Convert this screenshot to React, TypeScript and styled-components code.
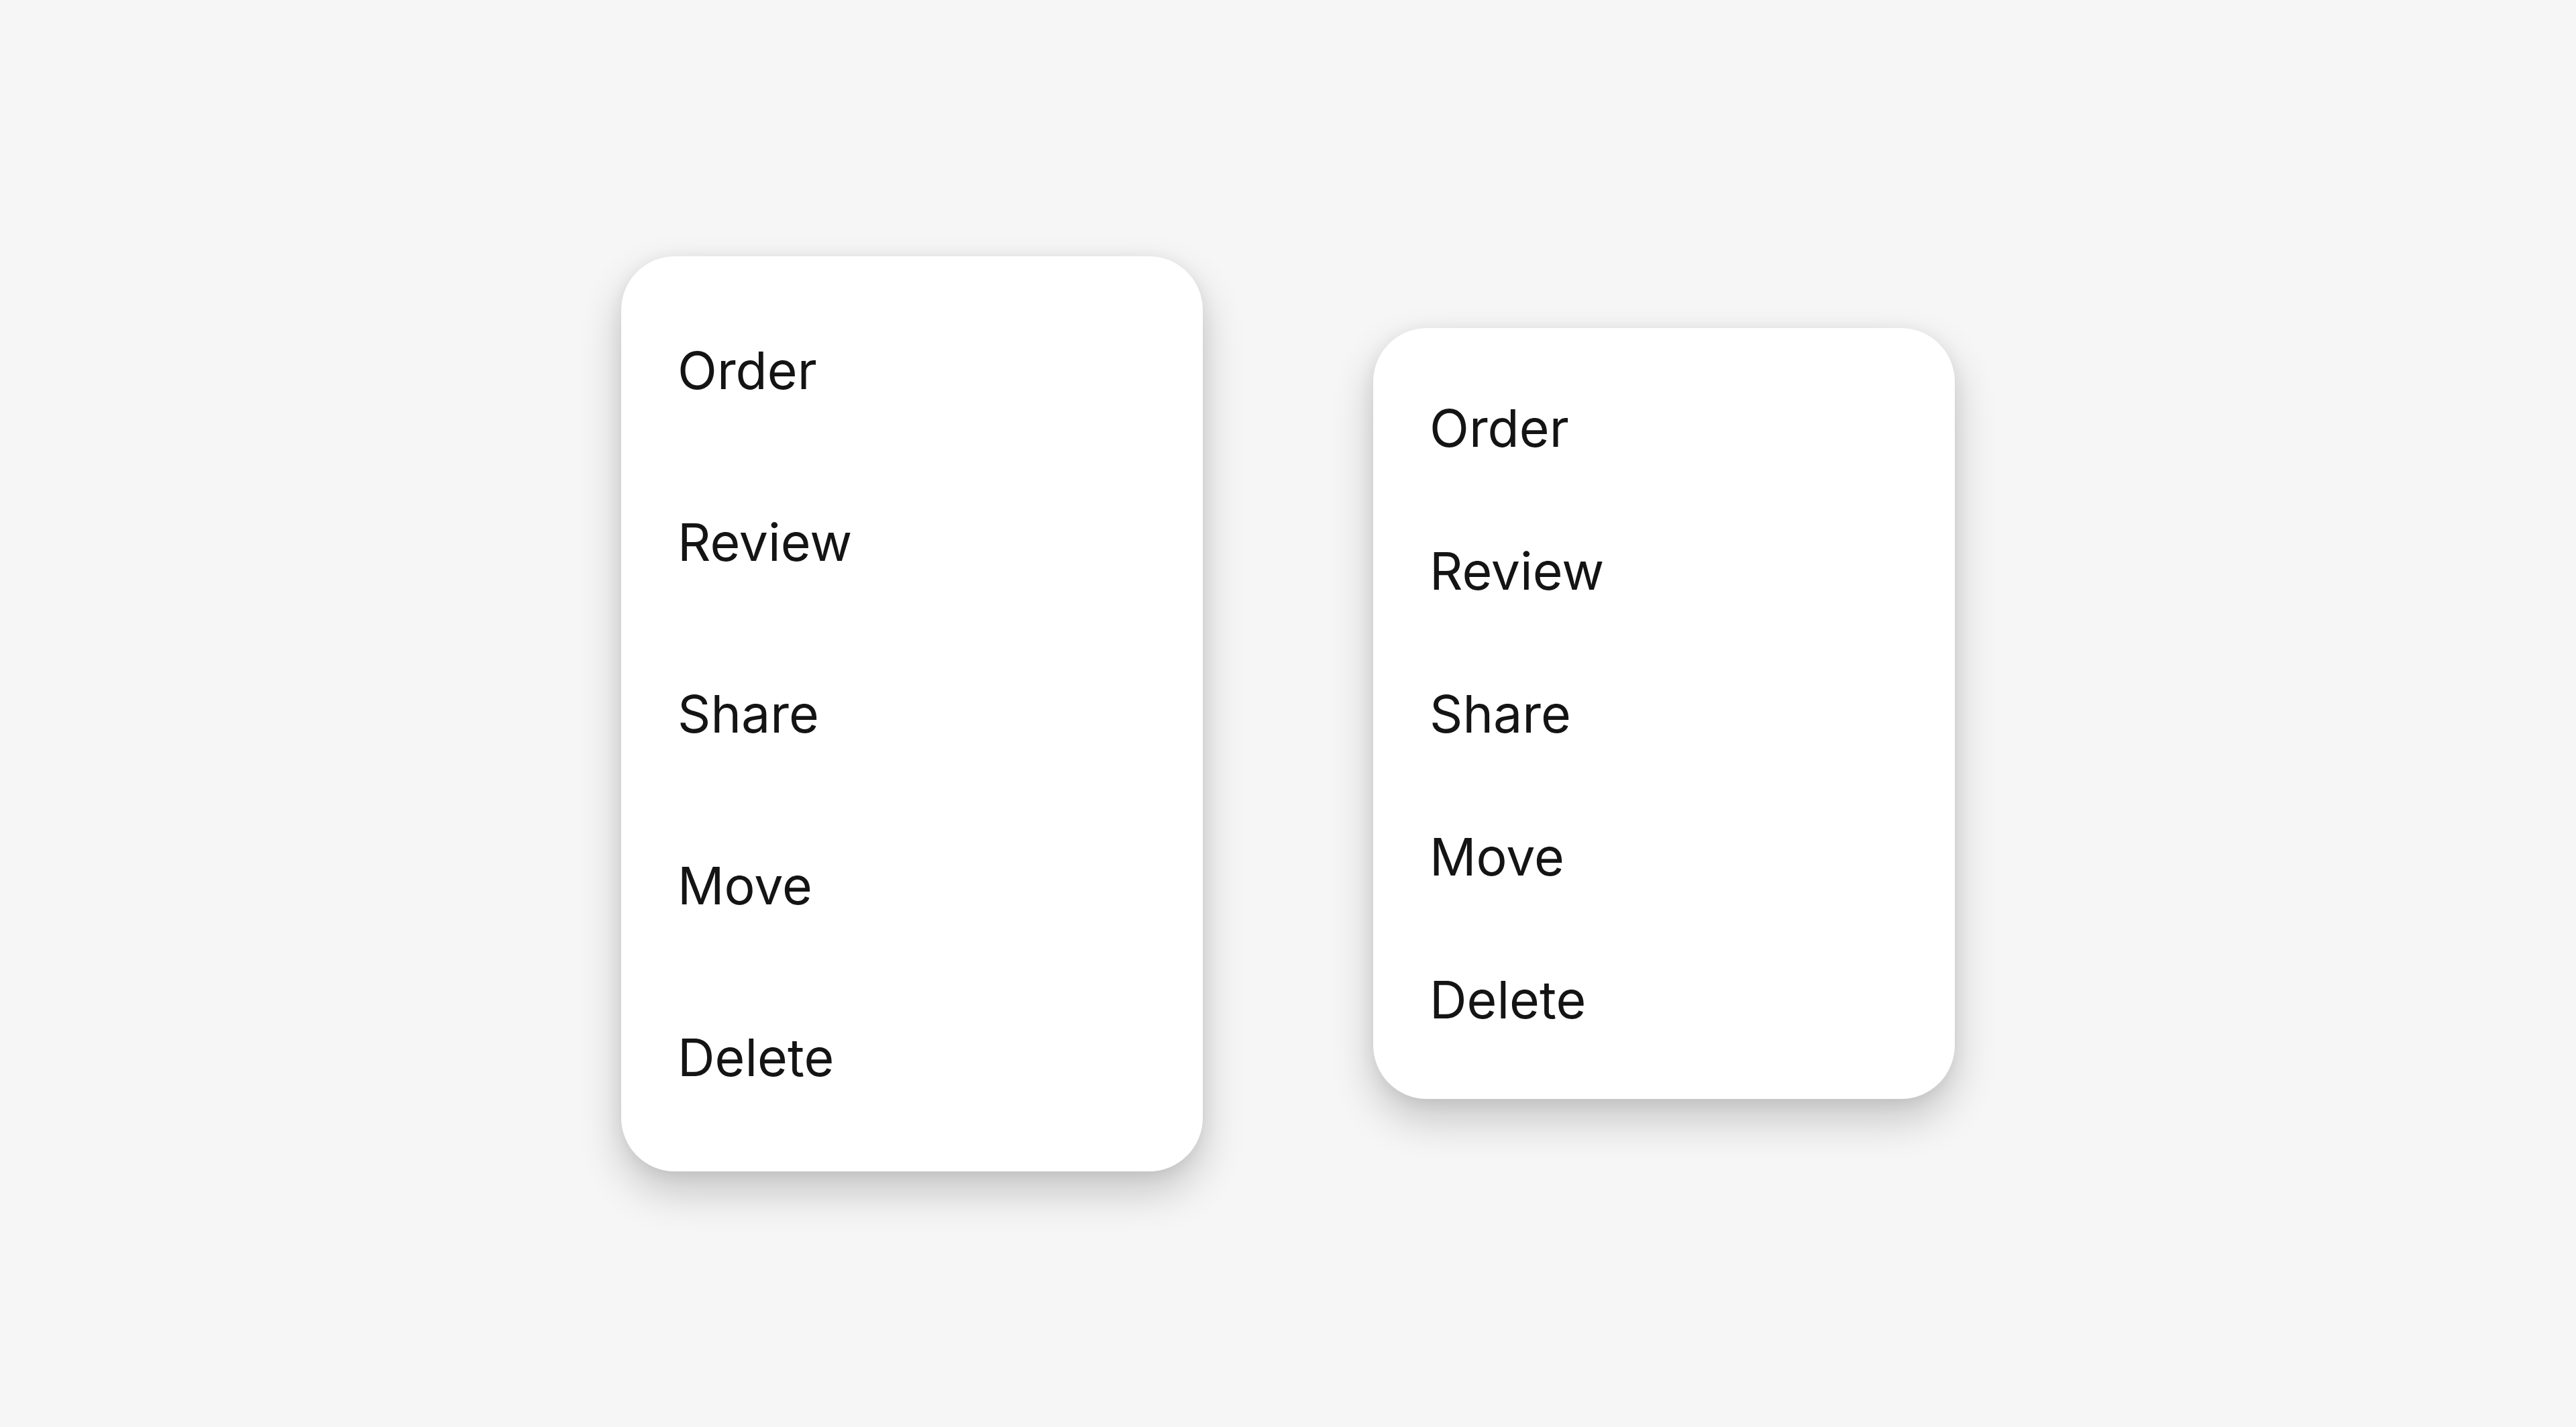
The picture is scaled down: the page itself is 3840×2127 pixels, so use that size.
import styled, { createGlobalStyle } from "styled-components";

const GlobalStyle = createGlobalStyle`
  html, body {
    margin: 0;
    padding: 0;
    background: #f6f6f6;
  }
  body {
    font-family: Inter, "Liberation Sans", sans-serif;
    -webkit-font-smoothing: antialiased;
  }
`;

const Stage = styled.main`
  display: flex;
  align-items: center;
  justify-content: center;
  gap: 254px;
  height: 100vh;
  box-sizing: border-box;
  background: #f6f6f6;
`;

const MenuCard = styled.ul`
  list-style: none;
  margin: 0;
  padding: 42px 0;
  width: 867px;
  box-sizing: border-box;
  background: #ffffff;
  border-radius: 80px;
  box-shadow:
    0 30px 64px rgba(0, 0, 0, 0.2),
    0 4px 26px rgba(0, 0, 0, 0.07);
`;

const MenuItem = styled.li<{ $height: number }>`
  display: flex;
  align-items: center;
  height: ${({ $height }) => $height}px;
  padding: 0 84px;
  font-size: 77px;
  font-weight: 400;
  letter-spacing: 0;
  color: #141414;
  cursor: default;
`;

const items = ["Order", "Review", "Share", "Move", "Delete"];

function Menu({ itemHeight }: { itemHeight: number }) {
  return (
    <MenuCard>
      {items.map((label) => (
        <MenuItem key={label} $height={itemHeight}>
          {label}
        </MenuItem>
      ))}
    </MenuCard>
  );
}

export default function App() {
  return (
    <>
      <GlobalStyle />
      <Stage>
        <Menu itemHeight={256} />
        <Menu itemHeight={213} />
      </Stage>
    </>
  );
}
